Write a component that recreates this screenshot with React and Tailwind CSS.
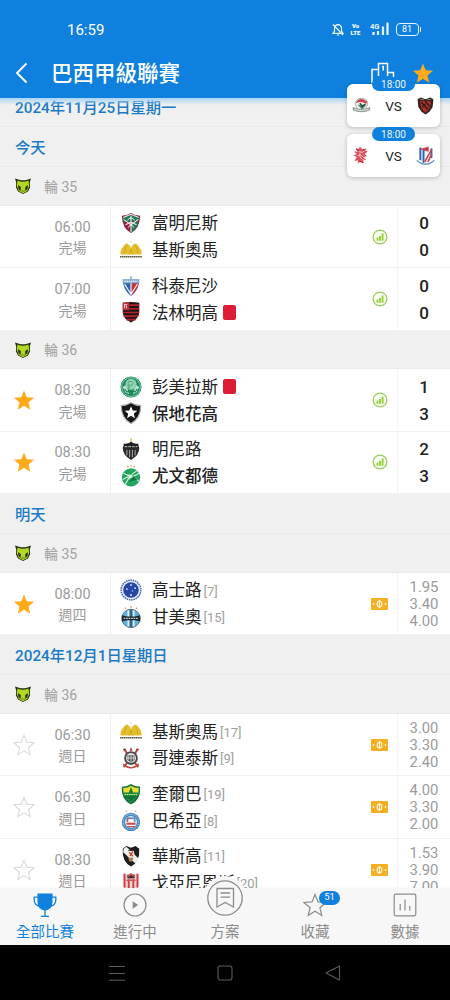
import React from 'react';

const STAR = 'M12 1.5l3 7.4 8 .6-6.100 5.200 1.900 7.800-6.800-4.200-6.800 4.200 1.900-7.800L1 9.500l8-.6z';

const Star = ({ filled, className = '' }) => (
  <svg viewBox="0 0 24 24" className={className}>
    <path
      d={STAR}
      fill={filled ? '#fdab19' : 'none'}
      stroke={filled ? 'none' : '#dadada'}
      strokeWidth="1.2"
    />
  </svg>
);

// Club crests, all drawn on a 24x24 box
const crests = {
  fluminense: (
    <>
      <path d="M2 4q5 0 10-3 5 3 10 3-.5 14-10 19Q2.500 18 2 4z" fill="#8a2440" />
      <path d="M3 6q9-5 18 0l-1 4L4 11z" fill="#1e7a54" />
      <path d="M12 11l8.500 0q-2 8-8.500 11.500z" fill="#1e7a54" />
      <path d="M3.500 6L12 2.500 20.500 6M4 8l8 6 8-6M12 4v18M6 14l6-3 6 3" fill="none" stroke="#f3e9e9" strokeWidth="1.200" />
      <path d="M8 9q4-5 8 0M9 17q3-6 6 0" fill="none" stroke="#fff" strokeWidth="1" />
    </>
  ),
  criciuma: (
    <>
      <path d="M.5 17q-.5-5 2.500-8 3-5 5-4 3 2 4 5 1-3 4-5 2-1 5 4 3 3 2.500 8z" fill="#e3bf2d" />
      <path d="M7 7l-3 9M12 11l-2 6M17 7l3 9M12 11l2 6" stroke="#c29a1c" strokeWidth=".7" fill="none" />
      <circle cx="12" cy="3" r=".8" fill="#d8c36a" />
      <path d="M0 19.300h24" stroke="#5b553c" strokeWidth="1.600" strokeDasharray="1.700 .4" />
    </>
  ),
  fortaleza: (
    <>
      <path d="M3 5h18q0 11-9 18Q3 16 3 5z" fill="#2c66ad" />
      <path d="M12 9h8.500q-1.500 8-8.500 13.500z" fill="#cf2e36" />
      <path d="M5 10l7 11 7-11M12 8v14" stroke="#fff" strokeWidth="1.200" fill="none" />
      <path d="M3 5h18v4H3z" fill="#8aaed2" />
      <path d="M5 7h14" stroke="#e9f1f8" strokeWidth="1.200" strokeDasharray="1.500 .8" />
      <path d="M12 0l1 4h-2z" fill="#6f8fb5" />
    </>
  ),
  flamengo: (
    <>
      <path d="M3 2q9-2 18 0v10q0 7-9 11.500Q3 19 3 12z" fill="#241516" />
      <path d="M10 4.500h11M10 8.500h11M3 12.500h18M4 16.500h16M7 20.300h10" stroke="#b3242c" strokeWidth="1.700" />
      <path d="M3 2q4-1 7-1v9H3z" fill="#b83338" />
      <path d="M5 3v5M5 4h3M7 5v3" stroke="#f4dada" strokeWidth="1" fill="none" />
    </>
  ),
  palmeiras: (
    <>
      <circle cx="12" cy="12" r="11.500" fill="#1f8a5f" />
      <circle cx="12" cy="12" r="10.300" fill="none" stroke="#a9dcc5" strokeWidth=".8" />
      <circle cx="12" cy="9" r="6" fill="#8fd3b4" />
      <path d="M9 6h4q3 2 0 4h-3v4M9 6v8" stroke="#4fa682" strokeWidth="1" fill="none" />
      <path d="M3 12l3-2 2 4 2 6-4-2zM21 12l-3-2-2 4-2 6 4-2z" fill="#bfe6d5" />
      <path d="M5 14l3 4M19 14l-3 4M8 17l8 0M10 20h4" stroke="#1c8158" strokeWidth="1.200" />
    </>
  ),
  botafogo: (
    <>
      <path d="M1.500 4Q7 4 12 .8 17 4 22.500 4 23 17 12 23.500 1 17 1.500 4z" fill="#151515" stroke="#a5a5a5" strokeWidth="1.200" />
      <path d="M12 4.500l1.900 4.800 5 .3-3.900 3.200 1.300 5-4.300-2.900-4.300 2.900 1.300-5L5.100 9.600l5-.3z" fill="#fff" />
    </>
  ),
  atletico: (
    <>
      <path d="M12 0v5" stroke="#e0c04a" strokeWidth="1.500" />
      <path d="M4 6q4 1 8-2 4 3 8 2v2l1 3H3l1-3z" fill="#202020" />
      <path d="M3 11h18q0 8-9 13-9-5-9-13z" fill="#2b2b2b" />
      <path d="M7.500 13v6M10.500 13v8M13.500 13v8M16.500 13v6" stroke="#b5b5b5" strokeWidth="1" />
      <path d="M5 9.500h14" stroke="#aaa" strokeWidth="1.300" strokeDasharray="3 1" />
    </>
  ),
  juventude: (
    <>
      <path d="M8.500 1.800l.1 0M12 1l.1 0M15.500 1.800l.1 0" stroke="#d5a23c" strokeWidth="1.700" strokeLinecap="round" />
      <circle cx="12" cy="13.500" r="10" fill="#23a45f" />
      <path d="M4 9q9 6 17 0M3 16q8-7 18 2M6 21q4-10 13-15" stroke="#d5f2e1" strokeWidth="1.100" fill="none" />
      <path d="M9 8l6 4-5 6 9-2" fill="#14713f" />
      <path d="M8 11h5l-3 5" stroke="#d5f2e1" strokeWidth=".9" fill="none" />
    </>
  ),
  cruzeiro: (
    <>
      <circle cx="12" cy="12" r="10.800" fill="#e6ebf7" stroke="#4765b4" strokeWidth="1.600" strokeDasharray="1.700 .8" />
      <circle cx="12" cy="12" r="8.500" fill="#2747a5" />
      <g fill="#dbe4fb">
        <circle cx="12" cy="6.500" r="1" />
        <circle cx="7.500" cy="11" r="1" />
        <circle cx="16.500" cy="10" r="1" />
        <circle cx="13.500" cy="13" r=".7" />
        <circle cx="12" cy="17.500" r="1.100" />
      </g>
    </>
  ),
  gremio: (
    <>
      <path d="M6 2.500h.1M12 1.200h.1M18 2.500h.1" stroke="#cf8d55" strokeWidth="1.800" strokeLinecap="round" />
      <circle cx="12" cy="13.500" r="10" fill="#5fb2dc" stroke="#4a6878" strokeWidth="1" />
      <path d="M9 5v17M15 5v17" stroke="#e4f3fb" strokeWidth="1.600" />
      <path d="M12 4v19" stroke="#3c4f5b" strokeWidth="1.800" />
      <path d="M2 10l6 1.500h8L22 10v7l-6-1.500H8L2 17z" fill="#20292f" />
      <path d="M4 13.500h16" stroke="#c3d5dd" strokeWidth="1.500" strokeDasharray="1.800 .9" />
    </>
  ),
  corinthians: (
    <>
      <path d="M4 2l16 20M20 2L4 22" stroke="#c2453f" strokeWidth="2" />
      <path d="M3 2.500l3-1 1 3zM21 2.500l-3-1-1 3zM12 0l1.500 4h-3z" fill="#9e3a38" />
      <path d="M4 18q8 8 16 0l1 2q-9 7-18 0z" fill="#c9403b" />
      <circle cx="12" cy="12" r="7.500" fill="#4b4547" />
      <circle cx="12" cy="12" r="5.500" fill="#ddd" />
      <path d="M8 9h8v5l-4 3-4-3z" fill="#555" />
      <path d="M9 9v5M12 9v7M15 9v5M8 12h8" stroke="#e5e5e5" strokeWidth=".9" />
    </>
  ),
  cuiaba: (
    <>
      <path d="M2 4q6 0 10-3 4 3 10 3 1 14-10 19.500Q1 18 2 4z" fill="#15713c" />
      <path d="M3.500 5.500q5 0 8.500-2.500 3.500 2.500 8.500 2.500l-.3 5H3.800z" fill="#e8df35" />
      <path d="M12 4l2.500 7h-5z" fill="#217a39" />
      <path d="M3.500 10.500h17v4h-17z" fill="#1b8a43" />
      <path d="M5 12.500h14" stroke="#e8e76a" strokeWidth="1.100" strokeDasharray="1.700 .7" />
      <path d="M7 16l5 5 5-5" stroke="#2c8f4b" strokeWidth="1.200" fill="none" />
    </>
  ),
  bahia: (
    <>
      <path d="M7 1.500h.1M17 1.500h.1" stroke="#c7b277" strokeWidth="1.700" strokeLinecap="round" />
      <circle cx="12" cy="13" r="10" fill="#4587bd" />
      <circle cx="12" cy="13" r="8.300" fill="none" stroke="#b6d3ea" strokeWidth="1" strokeDasharray="1.500 .8" />
      <circle cx="12" cy="13" r="6.500" fill="#e9f0f6" />
      <path d="M7 8h10v5H7z" fill="#5b96c8" />
      <path d="M8 9h4v4H8zM7 14h10v2H7zM8 17.500h8v1.200H8z" fill="#d04a4e" />
      <path d="M9 10h6v3H9z" fill="#fff" />
    </>
  ),
  vasco: (
    <>
      <path d="M3 4l4-3 5 2 5-2 4 3q1 14-9 19.500Q2 18 3 4z" fill="#1c1c1c" />
      <path d="M4 4l3-2L20.500 15q-1.500 3.500-4 5L3.500 8z" fill="#f0f0f0" />
      <path d="M9 7l6-1 1 6-5 3-3-3z" fill="#ece0d2" />
      <path d="M10 8l4 4M14 7l-3 5" stroke="#bd3b36" strokeWidth="1.300" />
      <path d="M9 14h6l-2 4h-3z" fill="#a88256" />
      <path d="M9 6h6" stroke="#3a3532" strokeWidth="1" />
    </>
  ),
  atleticoGO: (
    <>
      <path d="M3 2h18v12q-2 6-9 9-7-3-9-9z" fill="#f0d3d3" />
      <path d="M5 2v15M9.500 8v13M14.500 8v13M19 2v15" stroke="#cc3d43" strokeWidth="2" />
      <path d="M8 3h8v4H8z" fill="#463034" />
      <path d="M9 5l3-3 3 3M7 9h10" stroke="#e05258" strokeWidth="1.500" fill="none" />
    </>
  ),
  yokohama: (
    <>
      <path d="M4 10q1-7 8-7t8 7l-3 7H7z" fill="#f2eee9" stroke="#8b8581" strokeWidth=".8" />
      <path d="M5 9q2-6 9-5l5 3-1 3q-6-4-13-1z" fill="#c44650" />
      <path d="M7 11l6 6 5-6" fill="#3e8063" />
      <path d="M10 9l3 4 4-3" stroke="#33434b" strokeWidth="1.700" fill="none" />
      <path d="M1 14q11 5 22 0v4q-11 5-22 0z" fill="#8c9b94" />
      <path d="M3 17q9 3 18 0" stroke="#fff" strokeWidth="1" fill="none" />
    </>
  ),
  pohang: (
    <>
      <path d="M2 4l4-2 6 2 6-2 4 2-1 10-4 6-5 3.500L7 20l-4-6z" fill="#33221f" />
      <path d="M5 7l3-1 4 1 5-1 2 2-2 8-5 5-5-5z" fill="#a92f27" />
      <path d="M7 8l8 9M12 7l5 6M8 14l4-4" stroke="#211b1a" strokeWidth="1.600" />
      <path d="M5 4.500h5M14 4.500h5" stroke="#ab8862" strokeWidth="1" />
    </>
  ),
  dragon: (
    <>
      <path d="M5 2l3 2 2-3 3 3 5-1-2 3 4 1-4 3 3 3-4 1 3 4-4-1 1 5-4-3-3 3-1-4-4 1 3-5-4-2 4-2-4-3 5 0z" fill="#dc5360" />
      <path d="M8 7l5 1 3-2M7 12q4-2 6 1t4 2M10 9q-2 5 3 8" fill="none" stroke="#f6dadd" strokeWidth="1.100" />
      <path d="M5 4l4 2M14 5l4 0M9 19l5 2" stroke="#bf2638" strokeWidth="1.400" />
    </>
  ),
  shenhua: (
    <>
      <path d="M4 2h16v12q-1 6-7 9-7-3-8-9z" fill="#edf3f8" />
      <path d="M5.500 2v16M9.500 5v16M19.500 3v12" stroke="#2a64ae" strokeWidth="2.400" />
      <path d="M8 4l7-2v4zM20 4L11 20M20 10l-5 10" stroke="#cf3e4a" strokeWidth="1.900" fill="#2a64ae" />
      <path d="M1 18q5 5 11 5t11-5" stroke="#7199c0" strokeWidth="1.800" fill="none" />
    </>
  ),
};

const Crest = ({ name, className = 'size-[22px]' }) => (
  <svg viewBox="0 0 24 24" className={`shrink-0 ${className}`}>
    {crests[name]}
  </svg>
);

const LeagueIcon = () => (
  <svg viewBox="0 0 16 16" className="h-4 w-4 shrink-0">
    <path d="M0 .5l4 1.200q4 1.300 8 0L16 .5l-1.200 4 .2 5-2 4L8 16l-5-2.500-2-4 .2-5z" fill="#26310f" />
    <path d="M2.500 2.500q5.500 2.500 11 0l.7 5.500-2 5L8 15.300 3.800 13l-2-5z" fill="#b2d921" />
    <path d="M3 7l2.700 2v4L3.500 11zM13 7l-2.700 2v4l2.200-2z" fill="#26300d" />
    <path d="M7 12v2M9 12v2" stroke="#56700f" strokeWidth=".8" />
  </svg>
);

const StatsIcon = () => (
  <svg viewBox="0 0 16 16" className="h-4 w-4">
    <circle cx="8" cy="8" r="6.900" fill="#f8fff0" stroke="#9bcb5c" strokeWidth="1.300" />
    <path d="M5.500 8.500v3.300M8 7v4.800M10.600 4.600v7.200" stroke="#93cf3c" strokeWidth="1.900" />
  </svg>
);

const OddsIcon = () => (
  <svg viewBox="0 0 17 12" className="h-3 w-[17px]">
    <rect width="17" height="12" rx="1" fill="#f5af23" />
    <ellipse cx="8.500" cy="6" rx="2.300" ry="2.900" fill="none" stroke="#fff3d6" strokeWidth="1.300" />
    <path d="M8.500 1.800v8.400" stroke="#fff3d6" strokeWidth="1" />
    <path d="M2.500 5v2M14.500 5v2" stroke="#fff3d6" strokeWidth="1.300" />
  </svg>
);

const sections = [
  { date: '2024年11月25日星期一', rounds: [] },
  {
    date: '今天',
    rounds: [
      {
        round: '輪 35',
        matches: [
          { time: '06:00', state: '完場', home: ['fluminense', '富明尼斯'], away: ['criciuma', '基斯奧馬'], score: ['0', '0'] },
          { time: '07:00', state: '完場', home: ['fortaleza', '科泰尼沙'], away: ['flamengo', '法林明高'], score: ['0', '0'], red: 'away' },
        ],
      },
      {
        round: '輪 36',
        matches: [
          { time: '08:30', state: '完場', fav: true, home: ['palmeiras', '彭美拉斯'], away: ['botafogo', '保地花高'], score: ['1', '3'], red: 'home', winner: 'away' },
          { time: '08:30', state: '完場', fav: true, home: ['atletico', '明尼路'], away: ['juventude', '尤文都德'], score: ['2', '3'], winner: 'away' },
        ],
      },
    ],
  },
  {
    date: '明天',
    rounds: [
      {
        round: '輪 35',
        matches: [
          { time: '08:00', state: '週四', fav: true, home: ['cruzeiro', '高士路', '[7]'], away: ['gremio', '甘美奧', '[15]'], odds: ['1.95', '3.40', '4.00'] },
        ],
      },
    ],
  },
  {
    date: '2024年12月1日星期日',
    rounds: [
      {
        round: '輪 36',
        matches: [
          { time: '06:30', state: '週日', home: ['criciuma', '基斯奧馬', '[17]'], away: ['corinthians', '哥連泰斯', '[9]'], odds: ['3.00', '3.30', '2.40'] },
          { time: '06:30', state: '週日', home: ['cuiaba', '奎爾巴', '[19]'], away: ['bahia', '巴希亞', '[8]'], odds: ['4.00', '3.30', '2.00'] },
          { time: '08:30', state: '週日', home: ['vasco', '華斯高', '[11]'], away: ['atleticoGO', '戈亞尼恩斯', '[20]'], odds: ['1.53', '3.90', '7.00'] },
        ],
      },
    ],
  },
];

const Team = ({ team, red, bold }) => (
  <div className="flex h-[26.7px] items-center">
    <Crest name={team[0]} />
    <span className={`ml-[10px] pt-[3px] text-[16.500px] text-[#222] ${bold ? 'font-medium' : 'font-normal'}`}>{team[1]}</span>
    {team[2] && <span className="ml-[2px] pt-[2px] text-[13px] text-[#a0a0a0]">{team[2]}</span>}
    {red && <span className="ml-[5px] h-[15px] w-[13px] rounded-[2px] bg-[#dc1d36]" />}
  </div>
);

const MatchRow = ({ match }) => (
  <div className="flex h-[62.4px] shrink-0 border-b border-[#f1f1f1] bg-white">
    <div className="flex w-[35px] shrink-0 items-center justify-end">
      {(match.fav || match.odds) && <Star filled={match.fav} className="h-[22px] w-[22px]" />}
    </div>
    <div className="flex w-[75px] shrink-0 flex-col items-center justify-center pt-[3px] text-[#9b9b9b]">
      <div className="h-[20.500px] text-[14.500px] leading-[20.500px]">{match.time}</div>
      <div className="h-[20.500px] text-[14px] leading-[20.500px]">{match.state}</div>
    </div>
    <div className="flex flex-1 flex-col justify-center border-l border-[#efefef] pl-[9px]">
      <Team team={match.home} red={match.red === 'home'} bold={match.winner === 'home'} />
      <Team team={match.away} red={match.red === 'away'} bold={match.winner === 'away'} />
    </div>
    <div className="flex w-[35px] items-center justify-center">
      {match.odds ? <OddsIcon /> : <StatsIcon />}
    </div>
    <div className="flex w-[53px] flex-col items-center justify-center border-l border-[#f3f3f3] pt-px">
      {match.odds
        ? match.odds.map((o, i) => (
            <div key={i} className="h-[17px] text-[14.800px] leading-[17px] text-[#9b9b9b]">{o}</div>
          ))
        : match.score.map((s, i) => (
            <div key={i} className="h-[26.7px] text-[17px] leading-[26.7px] font-medium text-[#222]">{s}</div>
          ))}
    </div>
  </div>
);

const StatusBar = () => (
  <div className="flex h-[58px] items-center justify-between pr-[29px] pl-[67px] text-white">
    <span className="pt-[2px] text-[15px]">16:59</span>
    <div className="flex items-center">
      <svg viewBox="0 0 12 13" className="h-[13px] w-3" fill="none" stroke="#e6f5ff" strokeWidth="1.200">
        <path d="M1 10.300h10L9.500 8V5q-.3-3-3.500-3.300Q2.800 2 2.500 5v3zM4.800 12h2.400M1 1.500l10 10.500" />
      </svg>
      <div className="ml-[7px] flex w-[10px] flex-col items-center text-[6px] leading-[7px] font-black">
        <span>Vo</span>
        <span>LTE</span>
      </div>
      <svg viewBox="0 0 20 14" className="ml-[9px] h-[14px] w-5">
        <text x="0" y="6.500" fontSize="7.500" fontWeight="700" fill="#e6f5ff">4G</text>
        <path d="M3.500 10v3M8 9v4M13 4.500v8.500M17.500 .5v12.500" stroke="#e6f5ff" strokeWidth="2.200" />
      </svg>
      <div className="ml-[6px] flex h-[13px] w-[23px] items-center justify-center rounded-[4px] border border-[#e6f5ff] text-[9px] leading-none">
        81
      </div>
      <span className="ml-px h-[5px] w-[1.500px] rounded-r bg-[#e6f5ff]" />
    </div>
  </div>
);

const Header = () => (
  <header className="relative z-10 h-[98px] shrink-0 bg-[#0f80dd]">
    <StatusBar />
    <div className="flex h-[30px] items-center pr-4 pl-[15px]">
      <svg viewBox="0 0 13 22" className="h-[22px] w-[13px]" fill="none" stroke="#fff" strokeWidth="1.900">
        <path d="M11.500 1.500L2 11l9.500 9.500" />
      </svg>
      <h1 className="ml-[23px] flex-1 pt-[2px] text-[21.500px] leading-[30px] font-medium text-white">巴西甲級聯賽</h1>
      {/* podium */}
      <svg viewBox="0 0 24 22" className="h-[22px] w-6" fill="none" stroke="#fff" strokeWidth="1.500">
        <path d="M1 21V7.500h5.500M7.500 14V1.500h9V14M17 10.500h5.500V20M11 4.500h1.300v4" />
      </svg>
      <Star filled className="ml-[17px] h-[22px] w-[22px]" />
    </div>
    <div className="absolute inset-x-0 top-full h-[7px] bg-linear-to-b from-[#a9d3f5] to-[#f0f0f0]/0" />
  </header>
);

const LiveCard = ({ time, home, away }) => (
  <div className="relative flex h-[43px] w-[93px] items-center justify-between rounded-[6px] bg-white px-[5px] shadow-[0_1px_4px_rgba(0,0,0,0.22)]">
    <span className="absolute -top-[7px] left-[25px] flex h-[14px] w-[43px] items-center justify-center rounded-full bg-[#0f80dd] text-[10px] text-[#e8f6ff]">
      {time}
    </span>
    <Crest name={home} className="size-[19px]" />
    <span className="pt-px text-[13.500px] text-[#222]">VS</span>
    <Crest name={away} className="size-[19px]" />
  </div>
);

const Tab = ({ label, active, badge, children }) => (
  <div className={`relative flex w-[90px] flex-col items-center ${active ? 'text-[#0f80dd]' : 'text-[#8c8c8c]'}`}>
    <div className="flex h-[35px] items-center justify-center">{children}</div>
    <div className="text-[14.500px] leading-5">{label}</div>
    {badge && (
      <span className="absolute top-[3px] left-[49px] flex h-[14px] w-[21px] items-center justify-center rounded-full bg-[#0f80dd] text-[9.500px] text-white">
        {badge}
      </span>
    )}
  </div>
);

const TabBar = () => (
  <nav className="relative z-10 flex h-[57.500px] shrink-0 bg-[#f7f7f7] shadow-[0_-1px_2px_rgba(0,0,0,0.04)]">
    <Tab label="全部比賽" active>
      <svg viewBox="0 0 24 24" className="h-6 w-6" fill="none" stroke="currentColor" strokeWidth="1.300">
        <path d="M4.500.500h15v9q-.5 7.500-7.500 8-7-.5-7.500-8z" fill="currentColor" stroke="none" />
        <path d="M5 4.200H1.200q-.8 7.800 5 9M19 4.200h3.800q.8 7.800-5 9M12 16v7.200M8 23.300h8" />
      </svg>
    </Tab>
    <Tab label="進行中">
      <svg viewBox="0 0 24 24" className="h-6 w-6" fill="none" stroke="currentColor" strokeWidth="1.200">
        <circle cx="12" cy="12" r="11" />
        <path d="M9.700 8.300l5.500 3.700-5.500 3.700z" fill="currentColor" stroke="none" />
      </svg>
    </Tab>
    <Tab label="方案">
      {/* raised centre button, sticks out over the list */}
      <span className="absolute -top-[12px] flex h-11 w-11 items-center justify-center rounded-full bg-[#f7f7f7]">
        <svg viewBox="0 0 36 36" className="h-9 w-9" fill="none" stroke="currentColor" strokeWidth="1.300">
          <circle cx="18" cy="18" r="17.200" />
          <path d="M10 8.500h16.500V27L18.200 22.500 10 27zM13.500 13h9.500M13.500 17.200h9.500" />
        </svg>
      </span>
    </Tab>
    <Tab label="收藏" badge="51">
      <svg viewBox="0 0 24 24" className="h-6 w-6" fill="none" stroke="currentColor" strokeWidth="1.200">
        <path d={STAR} />
      </svg>
    </Tab>
    <Tab label="數據">
      <svg viewBox="0 0 24 24" className="h-6 w-6" fill="none" stroke="currentColor" strokeWidth="1.200">
        <rect x="1.200" y="1.200" width="21.600" height="21.600" rx="1.500" />
        <path d="M7.200 11v6.500M12 6.500v11M16.800 13v4.500" />
      </svg>
    </Tab>
  </nav>
);

const SystemNav = () => (
  <div className="relative z-20 flex h-[55px] shrink-0 items-center justify-center gap-[92px] bg-black">
    <svg viewBox="0 0 16 16" className="h-4 w-4" fill="none" stroke="#5c5c5c" strokeWidth="1.100">
      <path d="M0 1.500h16M0 8.500h16M0 15.200h16" />
    </svg>
    <svg viewBox="0 0 16 16" className="h-4 w-4" fill="none" stroke="#5c5c5c" strokeWidth="1.100">
      <rect x="1" y="1" width="14" height="14" rx="2.500" />
    </svg>
    <svg viewBox="0 0 16 16" className="h-4 w-4" fill="none" stroke="#5c5c5c" strokeWidth="1.100" strokeLinejoin="round">
      <path d="M14.500 1v14L1 8z" />
    </svg>
  </div>
);

export default function App() {
  return (
    <div
      lang="zh-Hant"
      className="relative flex h-[1000px] w-[450px] flex-col overflow-hidden bg-[#f0f0f0] font-[Roboto,'Noto_Sans_CJK_TC',sans-serif]"
    >
      <Header />
      <main className="min-h-0 flex-1 overflow-hidden">
        {/* list is scrolled a little under the header */}
        <div className="-mt-[11px] flex flex-col">
          {sections.map((section) => (
            <React.Fragment key={section.date}>
              <div className="flex h-[40.200px] shrink-0 items-center border-b border-[#e8e8e8] pt-[3px] pl-[15px] text-[15.300px] font-medium text-[#1b7ac6]">
                {section.date}
              </div>
              {section.rounds.map((r) => (
                <React.Fragment key={r.round}>
                  <div className="flex h-[38.600px] shrink-0 items-center gap-[13px] border-b border-[#ebebeb] pl-[15px] text-[14px] text-[#a3a3a3]">
                    <LeagueIcon />
                    <span className="pt-[2px]">{r.round}</span>
                  </div>
                  {r.matches.map((m, i) => (
                    <MatchRow key={i} match={m} />
                  ))}
                </React.Fragment>
              ))}
            </React.Fragment>
          ))}
        </div>
      </main>
      <TabBar />
      <SystemNav />

      {/* floating live matches */}
      <div className="absolute top-[84px] right-[10px] z-20 flex flex-col gap-[7px]">
        <LiveCard time="18:00" home="yokohama" away="pohang" />
        <LiveCard time="18:00" home="dragon" away="shenhua" />
      </div>
    </div>
  );
}
